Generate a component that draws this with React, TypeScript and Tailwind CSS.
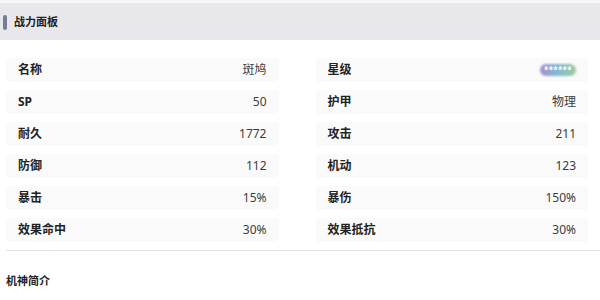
import { FC } from "react";

type Stat = { label: string; value: string; stars?: boolean };

const left: Stat[] = [
  { label: "名称", value: "斑鸠" },
  { label: "SP", value: "50" },
  { label: "耐久", value: "1772" },
  { label: "防御", value: "112" },
  { label: "暴击", value: "15%" },
  { label: "效果命中", value: "30%" },
];

const right: Stat[] = [
  { label: "星级", value: "******", stars: true },
  { label: "护甲", value: "物理" },
  { label: "攻击", value: "211" },
  { label: "机动", value: "123" },
  { label: "暴伤", value: "150%" },
  { label: "效果抵抗", value: "30%" },
];

const StarBadge: FC<{ text: string }> = ({ text }) => (
  <div className="relative flex h-[12px] w-[36px] items-center justify-center">
    <div className="absolute inset-0 rounded-full bg-gradient-to-r from-[#a98ccc] via-[#7fbcd8] to-[#a3c994] blur-[1px]" />
    <span className="relative text-[8px] font-bold leading-none tracking-[0.3px] text-white">{text}</span>
  </div>
);

const Row: FC<{ stat: Stat }> = ({ stat }) => (
  <div className="flex h-[24px] items-center justify-between rounded-[3px] bg-[#fafafa] pl-[12px] pr-[12px]">
    <span className="text-[12px] font-bold text-[#222]">{stat.label}</span>
    {stat.stars ? (
      <StarBadge text={stat.value} />
    ) : (
      <span className="text-[12px] text-[#3c3c3c]">{stat.value}</span>
    )}
  </div>
);

const App: FC = () => {
  return (
    <div
      className="h-[300px] w-[600px] overflow-hidden bg-white"
      style={{ fontFamily: '"Noto Sans", "Noto Sans CJK SC", sans-serif' }}
    >
      <div className="h-[4px] border-b border-[#e6e6e6] bg-[#f7f7f7]" />
      <div className="flex h-[36px] items-center bg-[#e8e7ec] pl-[3px]">
        <div className="h-[15px] w-[4px] rounded-[2px] bg-[#777d99]" />
        <span className="ml-[7px] text-[11px] font-bold text-[#222]">战力面板</span>
      </div>

      <div className="grid grid-cols-2 gap-x-[37px] pl-[6px] pr-[12px] pt-[18px]">
        <div className="flex flex-col gap-[8px]">
          {left.map((s) => (
            <Row key={s.label} stat={s} />
          ))}
        </div>
        <div className="flex flex-col gap-[8px]">
          {right.map((s) => (
            <Row key={s.label} stat={s} />
          ))}
        </div>
      </div>

      <div className="ml-[6px] mt-[8px] border-t border-[#e3e3e3]" />

      <div className="pl-[6px] pt-[22px] text-[11px] font-bold text-[#222]">机神简介</div>
    </div>
  );
};

export default App;
